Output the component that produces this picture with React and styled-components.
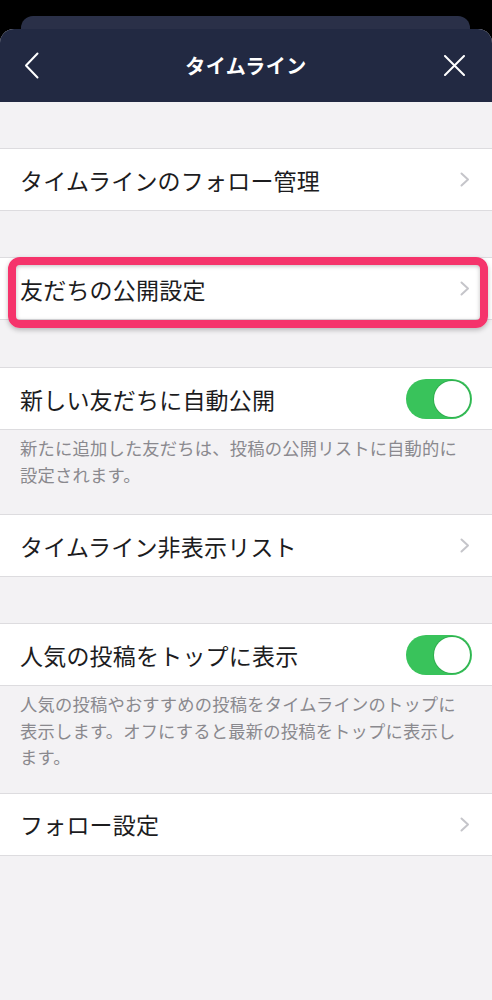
import React from "react";
import styled, { createGlobalStyle } from "styled-components";

const GlobalStyle = createGlobalStyle`
  html, body { margin: 0; padding: 0; background: #000; }
  body { font-family: "Noto Sans CJK JP", "Noto Sans", sans-serif; -webkit-font-smoothing: antialiased; }
  * { box-sizing: border-box; }
`;

const Page = styled.div`
  width: 492px;
  min-height: 1000px;
  background: #000;
  padding-top: 16px;
  display: flex;
  flex-direction: column;
`;

const BackCard = styled.div`
  margin: 0 22px 0 21px;
  height: 13px;
  background: #2a3048;
  border-radius: 12px 12px 0 0;
`;

const Sheet = styled.div`
  flex: 1;
  background: #f3f2f4;
  border-radius: 14px 14px 0 0;
  overflow: hidden;
  display: flex;
  flex-direction: column;
`;

const Header = styled.header`
  height: 73px;
  background: #222942;
  display: grid;
  grid-template-columns: 60px 1fr 60px;
  align-items: center;
  color: #fff;
`;

const Title = styled.h1`
  margin: 0;
  text-align: center;
  font-size: 20px;
  font-weight: 700;
  letter-spacing: 0.5px;
`;

const IconButton = styled.button`
  background: none;
  border: 0;
  padding: 0;
  height: 40px;
  display: flex;
  align-items: center;
  justify-content: ${(p) => (p.$end ? "flex-end" : "flex-start")};
  padding-left: ${(p) => (p.$end ? "0" : "24px")};
  padding-right: ${(p) => (p.$end ? "27px" : "0")};
  color: #fff;
`;

const Content = styled.main`
  display: flex;
  flex-direction: column;
  padding-top: 46px;
`;

const Gap = styled.div`
  height: ${(p) => p.$h || 46}px;
`;

const Row = styled.div`
  position: relative;
  height: 63px;
  background: #fff;
  border-top: 1px solid #dddcdf;
  border-bottom: 1px solid #dddcdf;
  display: flex;
  align-items: center;
  justify-content: space-between;
  padding: 0 20px 0 20px;
`;

const Label = styled.span`
  font-size: 23px;
  color: #1c1c1e;
  letter-spacing: 0.2px;
`;

const Highlight = styled.div`
  position: absolute;
  left: 8px;
  right: 4px;
  top: -1px;
  bottom: -9px;
  border: 8px solid #f5346b;
  border-radius: 12px;
  box-shadow: 0 2px 5px rgba(0, 0, 0, 0.25), inset 0 1px 4px rgba(0, 0, 0, 0.25);
  pointer-events: none;
`;

const Chevron = styled.svg`
  width: 10px;
  height: 15px;
  margin-right: 2px;
`;

const Note = styled.p`
  margin: 0;
  padding: 5px 24px ${(p) => p.$pb || 24}px 20px;
  font-size: 17.3px;
  line-height: 26.5px;
  color: #8a898e;
  letter-spacing: 0.2px;
`;

const Track = styled.div`
  width: 66px;
  height: 40px;
  border-radius: 20px;
  background: #39c35b;
  display: flex;
  align-items: center;
  justify-content: flex-end;
  padding: 2px;
`;

const Knob = styled.div`
  width: 36px;
  height: 36px;
  border-radius: 50%;
  background: #fff;
  box-shadow: 0 0 0 1px rgba(40, 160, 70, 0.6);
`;

const ChevronRight = () => (
  <Chevron viewBox="0 0 10 15" fill="none">
    <path d="M1.5 1.5 L8 7.5 L1.5 13.5" stroke="#c5c5ca" strokeWidth="2" strokeLinecap="round" strokeLinejoin="round" />
  </Chevron>
);

const Toggle = () => (
  <Track>
    <Knob />
  </Track>
);

const LinkRow = ({ label, children }) => (
  <Row>
    <Label>{label}</Label>
    <ChevronRight />
    {children}
  </Row>
);

const SwitchRow = ({ label }) => (
  <Row>
    <Label>{label}</Label>
    <Toggle />
  </Row>
);

export default function App() {
  return (
    <>
      <GlobalStyle />
      <Page>
        <BackCard />
        <Sheet>
          <Header>
            <IconButton aria-label="戻る">
              <svg width="15" height="27" viewBox="0 0 15 27" fill="none">
                <path d="M13.5 1.5 L2 13.5 L13.5 25.5" stroke="#fff" strokeWidth="2" strokeLinecap="round" strokeLinejoin="round" />
              </svg>
            </IconButton>
            <Title>タイムライン</Title>
            <IconButton $end aria-label="閉じる">
              <svg width="21" height="21" viewBox="0 0 21 21" fill="none">
                <path d="M1 1 L20 20 M20 1 L1 20" stroke="#fff" strokeWidth="2" strokeLinecap="round" />
              </svg>
            </IconButton>
          </Header>
          <Content>
            <LinkRow label="タイムラインのフォロー管理" />
            <Gap />
            <LinkRow label="友だちの公開設定">
              <Highlight />
            </LinkRow>
            <Gap $h={47} />
            <SwitchRow label="新しい友だちに自動公開" />
            <Note $pb={26}>新たに追加した友だちは、投稿の公開リストに自動的に設定されます。</Note>
            <LinkRow label="タイムライン非表示リスト" />
            <Gap />
            <SwitchRow label="人気の投稿をトップに表示" />
            <Note $pb={22}>人気の投稿やおすすめの投稿をタイムラインのトップに表示します。オフにすると最新の投稿をトップに表示します。</Note>
            <LinkRow label="フォロー設定" />
          </Content>
        </Sheet>
      </Page>
    </>
  );
}
